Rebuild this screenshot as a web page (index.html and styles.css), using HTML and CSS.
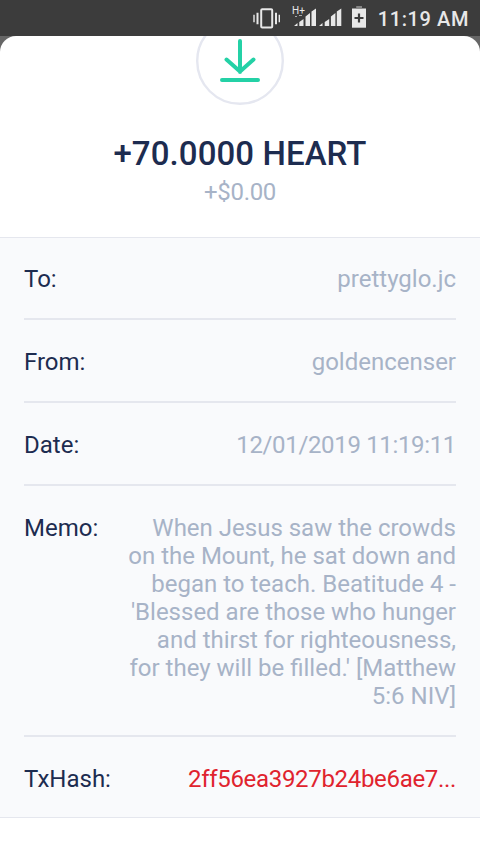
FILE: index.html
```html
<!DOCTYPE html>
<html lang="en">
<head>
<meta charset="utf-8">
<title>Transaction details</title>
<link rel="stylesheet" href="styles.css">
</head>
<body>
<header class="status-bar">
  <svg class="status-icons" width="116" height="36" viewBox="252 0 116 36" aria-hidden="true">
    <g fill="none" stroke="#e8e8e8">
      <rect x="261.200" y="9.200" width="11" height="18.400" rx="1" stroke-width="2"/>
      <path d="M257.500 12.700v11.600M276 12.700v11.600" stroke-width="2"/>
      <path d="M254 14.700v7.600M279.300 14.700v7.600" stroke-width="1.400"/>
    </g>
    <g fill="#e8e8e8">
      <path d="M294 26l3.500-3v3zM299.300 22l4.200-3v7h-4.200zM305.500 16.500l4.500-3.500v13h-4.500zM311.500 11.500l4.500-3v17.500h-4.500z"/>
      <path d="M319 26l3.500-3v3zM324.700 22l4.500-3v7h-4.500zM330.900 16.500l4.500-3.500v13h-4.500zM336.800 11.500l4.500-3v17.500h-4.500z"/>
      <path d="M352 8.500h14v19.200h-14z"/>
    </g>
    <path d="M356.200 6h5.800v2.500h-5.800z" fill="#858585"/>
    <path d="M359 13.500v9M354.500 18h9" stroke="#3c3c3c" stroke-width="2.200"/>
    <path d="M295 16.500h2M299 15.500h3" stroke="#aaa" stroke-width="1"/>
  </svg>
  <span class="network">H+</span>
  <time class="clock">11:19 AM</time>
</header>
<main class="sheet">
  <section class="summary">
    <svg class="receive-icon" width="88" height="88" viewBox="0 0 88 88" aria-hidden="true">
      <circle cx="44" cy="44" r="42.800" fill="#fff" stroke="#e5e7f0" stroke-width="2.400"/>
      <path d="M44 24v31M30.500 42.500L44 54.500l13.500-12M26 63h36" fill="none" stroke="#24d1a6" stroke-width="4" stroke-linecap="round" stroke-linejoin="round"/>
    </svg>
    <h1 class="amount">+70.0000 HEART</h1>
    <p class="fiat">+$0.00</p>
  </section>
  <dl class="details">
    <div class="row"><dt>To:</dt><dd>prettyglo.jc</dd></div>
    <div class="row"><dt>From:</dt><dd>goldencenser</dd></div>
    <div class="row"><dt>Date:</dt><dd class="date">12/01/2019 11:19:11</dd></div>
    <div class="row"><dt>Memo:</dt><dd>When Jesus saw the crowds<br>on the Mount, he sat down and<br>began to teach. Beatitude 4 -<br>'Blessed are those who hunger<br>and thirst for righteousness,<br>for they will be filled.' [Matthew<br>5:6 NIV]</dd></div>
    <div class="row"><dt>TxHash:</dt><dd class="hash">2ff56ea3927b24be6ae7...</dd></div>
  </dl>
</main>
</body>
</html>
```
FILE: styles.css
```css
* { box-sizing: border-box; }
body {
  margin: 0;
  height: 854px;
  overflow: hidden;
  background: #666;
  font-family: Roboto, "Liberation Sans", sans-serif;
  color: #1d2c50;
}
.status-bar {
  position: relative;
  display: flex;
  justify-content: space-between;
  height: 36px;
  padding: 0 11px 0 252px;
  background: #3c3c3c;
  color: #e8e8e8;
}
.status-icons {
  display: block;
  flex: none;
}
.network {
  position: absolute;
  left: 292px;
  top: 5px;
  font-size: 10px;
  line-height: 12px;
}
.clock {
  font-size: 20px;
  font-weight: 500;
  line-height: 38px;
  letter-spacing: 0.6px;
  white-space: nowrap;
}
.sheet {
  height: 818px;
  overflow: hidden;
  background: #fff;
  border-radius: 16px 16px 0 0;
}
.summary {
  display: flex;
  flex-direction: column;
  align-items: center;
  height: 201px;
}
.receive-icon {
  flex: none;
  margin-top: -19px;
}
.amount {
  margin: 29px 0 0;
  font-size: 33px;
  font-weight: 500;
  line-height: 40px;
  letter-spacing: 0.08px;
  white-space: nowrap;
}
.fiat {
  margin: 4px 0 0;
  font-size: 24px;
  line-height: 28px;
  letter-spacing: -0.3px;
  color: #a7b3c7;
}
.details {
  margin: 0;
  padding: 0 24px;
  background: #f9fafc;
  border-top: 1px solid #e5e7ee;
  border-bottom: 1px solid #e5e7ee;
  font-size: 24px;
  line-height: 28px;
}
.row {
  display: flex;
  justify-content: space-between;
  padding: 28px 0 25px;
  border-bottom: 2px solid #e5e7ee;
}
.row:first-child { padding-top: 27px; }
.row:last-child {
  padding-bottom: 24px;
  border-bottom: 0;
}
dt, dd {
  margin: 0;
  white-space: nowrap;
}
dd {
  text-align: right;
  color: #a7b3c7;
}
.date { letter-spacing: -0.34px; }
.hash {
  letter-spacing: -0.32px;
  color: #e0232e;
}
```
